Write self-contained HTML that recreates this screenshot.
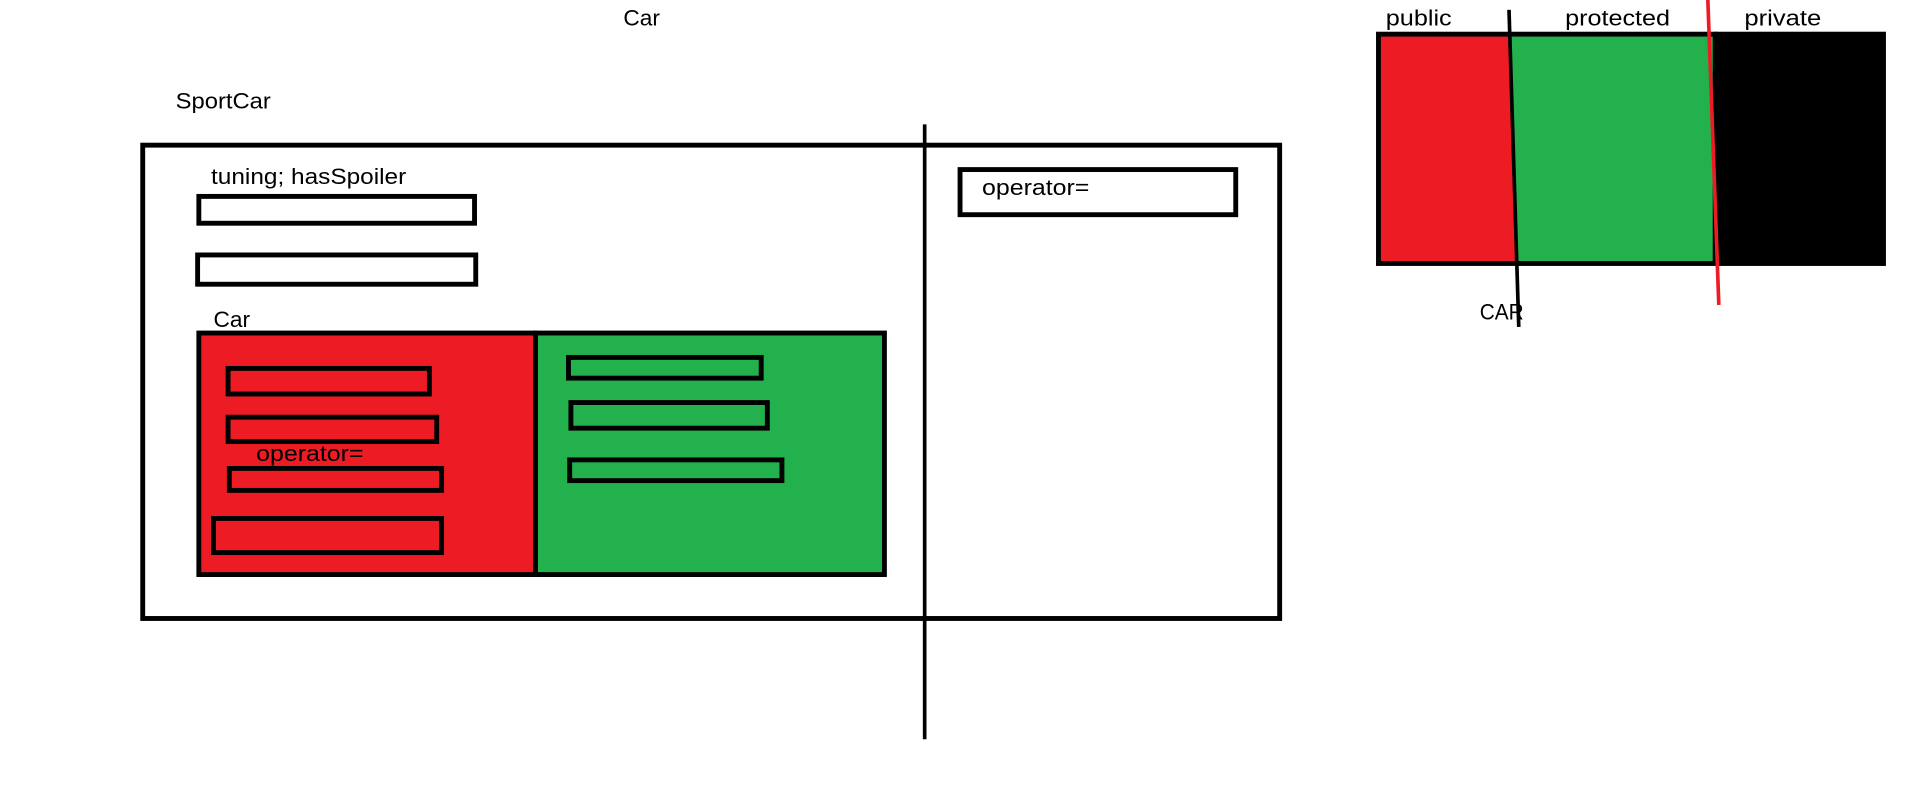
<!DOCTYPE html>
<html><head><meta charset="utf-8"><style>html,body{margin:0;padding:0;background:#fff;overflow:hidden}svg{display:block}</style></head>
<body>
<svg width="1914" height="810" viewBox="0 0 1569 664" preserveAspectRatio="none" xmlns="http://www.w3.org/2000/svg" font-family="Liberation Sans, sans-serif" font-size="18.5" fill="#000">
<rect width="1569" height="664" fill="#fff"/>
<text x="511" y="21" textLength="30" lengthAdjust="spacingAndGlyphs">Car</text>
<text x="144" y="89" textLength="78" lengthAdjust="spacingAndGlyphs">SportCar</text>
<rect x="117" y="119" width="932" height="388" fill="none" stroke="#000" stroke-width="4"/>
<text x="173" y="151" textLength="160" lengthAdjust="spacingAndGlyphs">tuning; hasSpoiler</text>
<rect x="163" y="161" width="226" height="22" fill="#fff" stroke="#000" stroke-width="4"/>
<rect x="162" y="209" width="228" height="24" fill="#fff" stroke="#000" stroke-width="4"/>
<text x="175" y="268" textLength="30" lengthAdjust="spacingAndGlyphs">Car</text>
<rect x="163" y="273" width="276" height="198" fill="#ed1c24" stroke="#000" stroke-width="4"/>
<rect x="439" y="273" width="286" height="198" fill="#22b14c" stroke="#000" stroke-width="4"/>
<g fill="none" stroke="#000" stroke-width="4">
<rect x="187" y="302" width="165" height="21"/>
<rect x="187" y="342" width="171" height="20"/>
<rect x="188" y="384" width="174" height="18"/>
<rect x="175" y="425" width="187" height="28"/>
<rect x="466" y="293" width="158" height="17"/>
<rect x="468" y="330" width="161" height="21"/>
<rect x="467" y="377" width="174" height="17"/>
<rect x="787" y="139" width="226" height="37"/>
</g>
<text x="210" y="378" textLength="88" lengthAdjust="spacingAndGlyphs">operator=</text>
<text x="805" y="160" textLength="88" lengthAdjust="spacingAndGlyphs">operator=</text>
<line x1="758" y1="102" x2="758" y2="606" stroke="#000" stroke-width="3"/>
<rect x="1130" y="28" width="120" height="188" fill="#ed1c24"/>
<polygon points="1238,28 1405,28 1409,216 1243,216" fill="#22b14c"/>
<rect x="1406" y="26" width="140" height="192" fill="#000"/>
<rect x="1130" y="28" width="276" height="188" fill="none" stroke="#000" stroke-width="4"/>
<line x1="1237" y1="8" x2="1245" y2="268" stroke="#000" stroke-width="3"/>
<line x1="1400" y1="0" x2="1409" y2="250" stroke="#ed1c24" stroke-width="3"/>
<text x="1136" y="21" textLength="54" lengthAdjust="spacingAndGlyphs">public</text>
<text x="1283" y="21" textLength="86" lengthAdjust="spacingAndGlyphs">protected</text>
<text x="1430" y="21" textLength="63" lengthAdjust="spacingAndGlyphs">private</text>
<text x="1213" y="262" textLength="36" lengthAdjust="spacingAndGlyphs">CAR</text>
</svg>
</body></html>
